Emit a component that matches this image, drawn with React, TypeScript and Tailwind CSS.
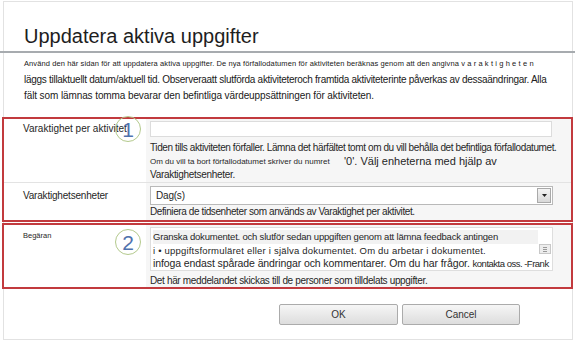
import React from "react";

function Circle({ n, top }: { n: string; top: string }) {
  return (
    <div
      className={`absolute left-[115px] ${top} w-[26px] h-[26px] rounded-full border-[1.5px] border-[#b3c98c] flex items-center justify-center text-[21px] leading-none text-[#4f72ad] font-['Liberation_Sans',Arial,sans-serif]`}
    >
      {n}
    </div>
  );
}

export default function App() {
  return (
    <div className="relative w-[576px] h-[342px] bg-white pt-[1px] pl-[3px] pr-[3px] pb-[2px] overflow-hidden font-['Liberation_Sans',Arial,sans-serif] text-[#262626]">
      <div className="h-full border border-[#e2e2e2] flex flex-col">
        {/* title */}
        <div className="h-[49px] pl-[20px] pt-[22px]">
          <div className="text-[20px] leading-[24px] text-[#1e1e1e] whitespace-nowrap">Uppdatera aktiva uppgifter</div>
        </div>
        <div className="h-[2px] bg-[#a7abaf] -ml-[4px] -mr-[3px]" />

        {/* description */}
        <div className="pl-[20px] mt-[5px] whitespace-nowrap text-[#202020]">
          <div className="text-[7.5px] leading-[12px] tracking-[0.1px]">
            Använd den här sidan för att uppdatera aktiva uppgifter. De nya förfallodatumen för aktiviteten beräknas genom att den angivna v a r a k t i g h e t e n
          </div>
          <div className="mt-[2px] text-[10px] leading-[16px] tracking-[-0.28px]">
            läggs tillaktuellt datum/aktuell tid. Observeraatt slutförda aktiviteteroch framtida aktiviteterinte påverkas av dessaändringar. Alla
          </div>
          <div className="text-[10px] leading-[16px] tracking-[-0.1px]">
            fält som lämnas tomma bevarar den befintliga värdeuppsättningen för aktiviteten.
          </div>
        </div>

        {/* red box 1 */}
        <div className="mt-[13px] -ml-[2px] mr-[-1px] border-2 border-[#c23a3e] flex flex-col">
          {/* row 1 */}
          <div className="flex h-[64px] border-b border-[#e3e3e3]">
            <div className="w-[142px] bg-white pl-[19px] pt-[3px] text-[10px] leading-[14px] whitespace-nowrap">
              Varaktighet per aktivitet
            </div>
            <div className="flex-1 bg-[#f6f6f6] pl-[4px] pt-[2px] whitespace-nowrap">
              <div className="w-[402px] h-[16px] bg-white border border-[#dcdcdc]" />
              <div className="mt-[5px] text-[10px] leading-[12px] tracking-[-0.4px]">
                Tiden tills aktiviteten förfaller. Lämna det härfältet tomt om du vill behålla det befintliga förfallodatumet.
              </div>
              <div className="flex items-center h-[15px]">
                <span className="text-[8px] w-[194px]">Om du vill ta bort förfallodatumet skriver du numret</span>
                <span className="text-[11px] tracking-[0px]">'0'. Välj enheterna med hjälp av</span>
              </div>
              <div className="text-[10px] leading-[12px] tracking-[-0.3px]">Varaktighetsenheter.</div>
            </div>
          </div>
          {/* row 2 */}
          <div className="flex h-[37px]">
            <div className="w-[142px] bg-white pl-[19px] pt-[6px] text-[10px] leading-[14px] whitespace-nowrap tracking-[-0.2px]">
              Varaktighetsenheter
            </div>
            <div className="flex-1 bg-[#f6f6f6] pl-[4px] pt-[3px] whitespace-nowrap">
              <div className="w-[403px] h-[19px] bg-white border border-[#b9b9b9] flex items-center justify-between pl-[5px] pr-[1px]">
                <span className="text-[10px] tracking-[-0.2px]">Dag(s)</span>
                <div className="w-[14px] h-[15px] border border-[#a9a9a9] bg-gradient-to-b from-[#f4f4f4] to-[#d8d8d8] flex items-center justify-center">
                  <svg width="5" height="3" viewBox="0 0 5 3"><path d="M0 0h5L2.5 3z" fill="#222" /></svg>
                </div>
              </div>
              <div className="mt-[1px] text-[10px] leading-[12px] tracking-[-0.4px]">
                Definiera de tidsenheter som används av Varaktighet per aktivitet.
              </div>
            </div>
          </div>
        </div>

        {/* red box 2 */}
        <div className="mt-[1px] -ml-[2px] mr-[-1px] border-2 border-[#c23a3e] flex h-[66px]">
          <div className="w-[142px] bg-white pl-[19px] pt-[5px] text-[7.5px] leading-[12px] whitespace-nowrap">
            Begäran
          </div>
          <div className="flex-1 min-w-0 bg-[#f6f6f6] pl-[4px] pt-[2px] whitespace-nowrap">
            <div className="relative w-[403px] h-[44px] bg-white border border-[#dedede] pl-[2px] pt-[2px] overflow-hidden">
              <div className="text-[9.5px] leading-[14px] tracking-[-0.2px] bg-[#f2f2f2] mr-[14px]">
                Granska dokumentet. och slutför sedan uppgiften genom att lämna feedback antingen
              </div>
              <div className="text-[9.5px] leading-[13px] tracking-[0.2px]">
                i • uppgiftsformuläret eller i själva dokumentet. Om du arbetar i dokumentet.
              </div>
              <div className="text-[10.5px] leading-[13px] tracking-[-0.1px]">
                infoga endast spårade ändringar och kommentarer. Om du har frågor. <span className="text-[9.5px] tracking-[-0.5px]">kontakta oss. -Frank</span>
              </div>
              <div className="absolute right-[1px] top-[16px] w-[12px] h-[10px] border border-[#c8c8c8] bg-[#ededed] flex flex-col items-center justify-center gap-[1px]">
                <div className="w-[4px] h-px bg-[#999]" />
                <div className="w-[4px] h-px bg-[#999]" />
                <div className="w-[4px] h-px bg-[#999]" />
              </div>
            </div>
            <div className="mt-[4px] text-[10px] leading-[12px] tracking-[-0.35px]">
              Det här meddelandet skickas till de personer som tilldelats uppgifter.
            </div>
          </div>
        </div>

        {/* buttons */}
        <div className="mt-[15px] flex justify-end gap-[4px] pr-[52px]">
          <button className="w-[119px] h-[21px] rounded-[2px] border border-[#ababab] bg-gradient-to-b from-[#f6f6f6] to-[#dddddd] text-[10px] text-[#333]">
            OK
          </button>
          <button className="w-[118px] h-[21px] rounded-[2px] border border-[#ababab] bg-gradient-to-b from-[#f6f6f6] to-[#dddddd] text-[10px] text-[#333]">
            Cancel
          </button>
        </div>
      </div>

      <Circle n="1" top="top-[116px]" />
      <Circle n="2" top="top-[229px]" />
    </div>
  );
}
